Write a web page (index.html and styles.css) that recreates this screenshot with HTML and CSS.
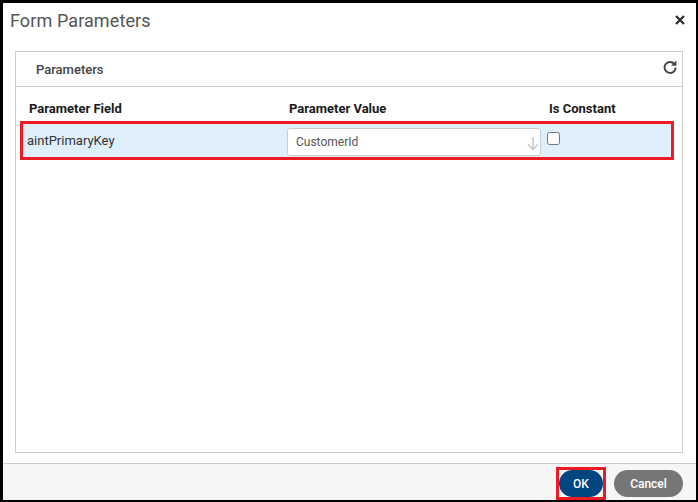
FILE: index.html
```
<!DOCTYPE html>
<html lang="en">
<head>
<meta charset="utf-8">
<title>Form Parameters</title>
<link rel="stylesheet" href="styles.css">
</head>
<body>
<div class="dialog">
  <header class="dialog-head">
    <h1 class="dialog-title">Form Parameters</h1>
    <svg class="close-icon" width="10" height="10" viewBox="0 0 10 10"><path d="M1 1L9 9M9 1L1 9" stroke="#2b2b2b" stroke-width="2.2" fill="none"/></svg>
  </header>
  <section class="panel">
    <div class="panel-head">
      <span class="panel-title">Parameters</span>
      <svg class="refresh-icon" width="14" height="14" viewBox="0 0 14 14"><path d="M11.4 4A5.5 5.5 0 1 0 12.6 7.6" stroke="#444" stroke-width="1.9" fill="none"/><path d="M13.4 0.4V5.8H8Z" fill="#444"/></svg>
    </div>
    <div class="table-head">
      <span class="col-field">Parameter Field</span>
      <span class="col-value">Parameter Value</span>
      <span class="col-const">Is Constant</span>
    </div>
    <div class="row">
      <span class="cell-field">aintPrimaryKey</span>
      <div class="select">
        <span>CustomerId</span>
        <svg class="select-arrow" width="12" height="15" viewBox="0 0 12 15"><path d="M6 1V13M1.2 8.4L6 13.4L10.8 8.4" stroke="#c4c4c4" stroke-width="1.4" fill="none"/></svg>
      </div>
      <span class="checkbox"></span>
    </div>
  </section>
  <footer class="dialog-foot">
    <div class="ok-mark"><button class="btn btn-ok" type="button">OK</button></div>
    <button class="btn btn-cancel" type="button">Cancel</button>
  </footer>
</div>
</body>
</html>
```
FILE: styles.css
```
* { box-sizing: border-box; }
html, body { margin: 0; padding: 0; }
body { width: 698px; height: 502px; background: #fff; font-family: Roboto, "Liberation Sans", sans-serif; overflow: hidden; }
.dialog { width: 698px; height: 502px; border: 3px solid #000; border-right-width: 2px; display: flex; flex-direction: column; background: #fff; }
.dialog-head { height: 48px; flex: none; display: flex; justify-content: space-between; padding: 7px 11px 0 7px; }
.dialog-title { margin: 0; font-size: 18px; line-height: 22px; font-weight: 400; color: #555; letter-spacing: 0.1px; }
.close-icon { margin-top: 5px; }
.panel { flex: none; height: 402px; margin: 0 13px 0 12px; border: 1px solid #ccc; display: flex; flex-direction: column; }
.panel-head { height: 35px; flex: none; border-bottom: 1px solid #ccc; display: flex; justify-content: space-between; padding: 0 5px 0 20px; }
.panel-title { font-size: 13px; font-weight: 500; color: #444; line-height: 36px; }
.refresh-icon { margin-top: 8px; }
.table-head { height: 34px; flex: none; display: flex; font-size: 13px; font-weight: 700; color: #1a1a1a; line-height: 43px; }
.col-field { width: 273px; padding-left: 13px; }
.col-value { width: 260px; }
.row { height: 39px; flex: none; margin: 0 8px 0 4px; border: 3px solid #ed1c24; background: #dff0fc; display: flex; align-items: flex-start; }
.cell-field { width: 264px; padding-left: 4px; font-size: 13px; color: #333; line-height: 33px; }
.select { width: 254px; height: 28px; margin-top: 4px; background: #fff; border: 1px solid #ccc; border-radius: 3px; display: flex; align-items: center; justify-content: space-between; padding: 0 1px 0 8px; font-size: 12px; color: #555; }
.select-arrow { margin-top: 2px; }
.checkbox { width: 13px; height: 13px; margin: 8px 0 0 6px; background: #fff; border: 1px solid #767676; border-radius: 2.5px; }
.dialog-foot { flex: 1; margin-top: 10px; border-top: 1px solid #ccc; background: #f6f6f6; display: flex; justify-content: flex-end; align-items: flex-start; padding: 3px 13px 0 0; gap: 8px; }
.ok-mark { width: 50px; height: 33px; flex: none; border: 3px solid #ed1c24; }
.btn { display: block; width: 44px; height: 27px; border: none; border-radius: 14px; color: #fff; font-family: inherit; font-size: 12px; font-weight: 500; padding: 0; }
.btn-ok { background: #004680; }
.btn-cancel { width: 69px; margin-top: 3px; background: #767676; }
```
